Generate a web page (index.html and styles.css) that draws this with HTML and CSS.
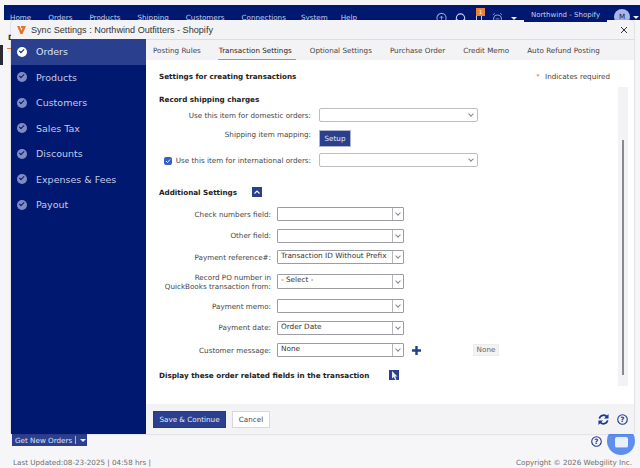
FILE: index.html
```html
<!DOCTYPE html>
<html>
<head>
  <title>Sync Settings</title>
  <link rel="stylesheet" href="styles.css">
</head>
<body>

  <div class="page-top"></div>
  <div class="nav">
    <a class="nav-link home">Home</a>
    <a class="nav-link">Orders</a>
    <a class="nav-link">Products</a>
    <a class="nav-link">Shipping</a>
    <a class="nav-link">Customers</a>
    <a class="nav-link connections">Connections</a>
    <a class="nav-link system">System</a>
    <a class="nav-link">Help</a>
    <div class="nav-icons">
      <svg width="11" height="12" viewBox="0 0 12 12"><circle cx="6" cy="6" r="5" fill="none" stroke="#8fa0d8" stroke-width="1.2"/><path d="M4 6l2-2 2 2M6 4v4" fill="none" stroke="#8fa0d8"/></svg>
      <svg width="11" height="12" viewBox="0 0 12 12"><path d="M1.500 9V6a4.500 4.500 0 0 1 9 0v3" fill="none" stroke="#c6d0ee" stroke-width="1.200"/><path d="M1 7h2v3H1zM9 7h2v3H9z" fill="#c6d0ee"/></svg>
      <span class="bell"><span class="bell-badge">1</span></span>
      <svg width="11" height="12" viewBox="0 0 12 12"><circle cx="6" cy="7" r="4.3" fill="none" stroke="#8fa0d8" stroke-width="1.2"/><path d="M1 2.5l2-1.5M11 2.5L9 1M4 7h4" stroke="#8fa0d8"/></svg>
      <span class="caret"></span>
    </div>
    <div class="store">Northwind - Shopify</div>
    <div class="avatar">M</div>
    <span class="caret"></span>
  </div>

  <div class="page-left"></div>
  <div class="page-peek">D</div>
  <div class="page-peek-line"></div>

  <div class="page-bottom">
    <div class="get-orders">Get New Orders <span class="sep"></span><span class="caret"></span></div>
    <div class="status">
      <span>Last Updated:08-23-2025 | 04:58 hrs |</span>
      <span>Copyright © 2026 Webgility Inc.</span>
    </div>
  </div>

  <svg class="page-help" width="11" height="11" viewBox="0 0 12 12"><circle cx="6" cy="6" r="5.2" fill="none" stroke="#1f3a8a" stroke-width="1.2"/><text x="6" y="8.8" text-anchor="middle" class="q">?</text></svg>
  <div class="chat"><div class="chat-icon"></div></div>

  <div class="modal">
    <div class="modal-title">
      <svg width="9" height="8" viewBox="0 0 9 8"><path d="M0 0h2.500l2 4.500L5.500 2H4V0h5L5.500 8h-2z" fill="#e8742a"/></svg>
      <span>Sync Settings : Northwind Outfitters - Shopify</span>
      <svg class="close" width="8" height="8" viewBox="0 0 8 8"><path d="M1 1l6 6M7 1L1 7" stroke="#333" stroke-width="1"/></svg>
    </div>
    <div class="modal-body">
      <div class="sidebar">
        <div class="side-item active"><span class="tick"></span>Orders</div>
        <div class="side-item"><span class="tick"></span>Products</div>
        <div class="side-item"><span class="tick"></span>Customers</div>
        <div class="side-item"><span class="tick"></span>Sales Tax</div>
        <div class="side-item"><span class="tick"></span>Discounts</div>
        <div class="side-item"><span class="tick"></span>Expenses &amp; Fees</div>
        <div class="side-item"><span class="tick"></span>Payout</div>
      </div>
      <div class="main">
        <div class="tabs">
          <div class="tab">Posting Rules</div>
          <div class="tab current">Transaction Settings</div>
          <div class="tab">Optional Settings</div>
          <div class="tab">Purchase Order</div>
          <div class="tab">Credit Memo</div>
          <div class="tab">Auto Refund Posting</div>
        </div>
        <div class="content">
          <div class="scrollbar"><div class="thumb"></div></div>

          <div class="head-row">
            <b>Settings for creating transactions</b>
            <span class="required"><i>*</i> Indicates required</span>
          </div>

          <h4 class="shipping-head">Record shipping charges</h4>
          <div class="row top">
            <label>Use this item for domestic orders:</label>
            <div class="wide-select"><span class="chev"></span></div>
          </div>
          <div class="row top setup-row">
            <label>Shipping item mapping:</label>
            <button class="setup">Setup</button>
          </div>
          <div class="row top intl-row">
            <label><span class="check"><svg width="6" height="6" viewBox="0 0 6 6"><path d="M1 3l1.500 1.500L5 1.500" fill="none" stroke="#dfe6f8" stroke-width="1"/></svg></span>Use this item for international orders:</label>
            <div class="wide-select"><span class="chev"></span></div>
          </div>

          <div class="additional">
            <h4>Additional Settings</h4>
            <span class="square-btn"><svg width="6" height="4" viewBox="0 0 6 4"><path d="M.5 3.500L3 1l2.500 2.500" fill="none" stroke="#fff" stroke-width="1.100"/></svg></span>
          </div>

          <div class="row low"><label>Check numbers field:</label><div class="combo"><span class="val"></span><span class="arrow"><span class="chev"></span></span></div></div>
          <div class="row low"><label>Other field:</label><div class="combo"><span class="val"></span><span class="arrow"><span class="chev"></span></span></div></div>
          <div class="row low"><label>Payment reference#:</label><div class="combo"><span class="val">Transaction ID Without Prefix</span><span class="arrow"><span class="chev"></span></span></div></div>
          <div class="row low two-line"><label>Record PO number in<br>QuickBooks transaction from:</label><div class="combo"><span class="val">- Select -</span><span class="arrow"><span class="chev"></span></span></div></div>
          <div class="row low"><label>Payment memo:</label><div class="combo"><span class="val"></span><span class="arrow"><span class="chev"></span></span></div></div>
          <div class="row low"><label>Payment date:</label><div class="combo"><span class="val">Order Date</span><span class="arrow"><span class="chev"></span></span></div></div>
          <div class="row low message-row">
            <label>Customer message:</label>
            <div class="combo"><span class="val">None</span><span class="arrow"><span class="chev"></span></span></div>
            <svg class="plus" width="9" height="9" viewBox="0 0 9 9"><path d="M4.500 0v9M0 4.500h9" stroke="#23408f" stroke-width="2.400"/></svg>
            <span class="chip">None</span>
          </div>

          <div class="display">
            <h4>Display these order related fields in the transaction</h4>
            <span class="square-btn"><svg width="7" height="9" viewBox="0 0 7 9"><path d="M1 0v7.500l1.800-1.600L4.200 9 5.500 8.400 4.200 5.400h2.300z" fill="#e8e8f0"/></svg></span>
          </div>
        </div>
        <div class="footer">
          <button class="save">Save &amp; Continue</button>
          <button class="cancel">Cancel</button>
          <div class="footer-icons">
            <svg width="11" height="11" viewBox="0 0 12 12"><path d="M1.500 5A4.700 4.700 0 0 1 10 3.500M10.500 7A4.700 4.700 0 0 1 2 8.500" fill="none" stroke="#1f3a8a" stroke-width="1.900"/><path d="M11.500 0v5h-5zM.5 12V7h5z" fill="#1f3a8a"/></svg>
            <svg width="11" height="11" viewBox="0 0 12 12"><circle cx="6" cy="6" r="5.200" fill="none" stroke="#1f3a8a" stroke-width="1.200"/><text x="6" y="8.800" text-anchor="middle" class="q">?</text></svg>
          </div>
        </div>
      </div>
    </div>
  </div>

</body>
</html>
```

FILE: styles.css
```css
html, body {
  margin: 0;
  height: 100%;
}

body {
  position: relative;
  width: 640px;
  height: 468px;
  overflow: hidden;
  background-color: #f6f6f8;
  font-family: "DejaVu Sans", Verdana, sans-serif;
  font-size: 7.2px;
  color: #333;
}

.page-top {
  height: 5px;
  background-color: #f4f4f6;
}

.nav {
  display: flex;
  align-items: flex-start;
  height: 15px;
  margin-left: 4px;
  padding-top: 8px;
  box-sizing: border-box;
  background-color: #00186f;
  color: #c8d0ea;
}

.nav-link {
  margin-right: 17px;
  white-space: nowrap;
}

.nav-link.home {
  margin-left: 6px;
}

.nav-link.connections {
  margin-right: 15px;
}

.nav-link.system {
  margin-right: 13px;
}

.nav-icons {
  position: absolute;
  top: 12px;
  left: 436px;
  display: flex;
  align-items: center;
  gap: 8px;
}

.bell {
  position: relative;
  width: 6px;
  height: 12px;
  margin: 0 2px;
  border: 1px solid #c6d0ee;
  border-bottom: none;
  border-radius: 3px 3px 0 0;
  box-sizing: border-box;
}

.bell-badge {
  position: absolute;
  top: -5px;
  left: -1px;
  width: 9px;
  height: 8px;
  background-color: #e8843a;
  color: #fff;
  font-size: 5px;
  line-height: 8px;
  text-align: center;
}

.caret {
  display: inline-block;
  width: 0;
  height: 0;
  border-left: 3px solid transparent;
  border-right: 3px solid transparent;
  border-top: 3px solid #e8ecf8;
}

.store {
  position: absolute;
  z-index: 2;
  top: 5px;
  left: 524px;
  width: 83px;
  height: 17px;
  background-color: #00186f;
  color: #c8d0ea;
  font-size: 7px;
  line-height: 20px;
  text-align: center;
  white-space: nowrap;
}

.avatar {
  position: absolute;
  top: 9px;
  left: 614px;
  width: 16px;
  height: 16px;
  border-radius: 50%;
  background-color: #a8b8e4;
  color: #223;
  font-size: 7.2px;
  line-height: 16px;
  text-align: center;
}

.nav > .caret {
  position: absolute;
  top: 16px;
  left: 633px;
}

.page-left {
  position: absolute;
  top: 45px;
  left: 0;
  width: 3px;
  height: 20px;
  background-color: #2a2a33;
}

.page-peek {
  position: absolute;
  top: 33px;
  left: 8px;
  font-size: 7.2px;
  font-weight: bold;
}

.page-peek-line {
  position: absolute;
  top: 48px;
  left: 7px;
  width: 4px;
  height: 1px;
  background-color: #e8843a;
}

.page-bottom {
  position: absolute;
  top: 434px;
  left: 0;
  right: 0;
  bottom: 0;
}

.get-orders {
  display: flex;
  align-items: center;
  width: 75px;
  height: 12px;
  margin-left: 12px;
  padding-left: 3px;
  box-sizing: border-box;
  background-color: #2b3f8f;
  color: #dfe4f4;
  white-space: nowrap;
}

.get-orders .sep {
  width: 1px;
  height: 8px;
  margin: 0 4px 0 3px;
  background-color: #aab4dc;
}

.status {
  display: flex;
  justify-content: space-between;
  margin: 12px 8px 0 13px;
  color: #6d6d6d;
  white-space: nowrap;
}

.page-help {
  position: absolute;
  top: 436px;
  left: 591px;
}

.chat {
  position: absolute;
  top: 427px;
  left: 607px;
  width: 28px;
  height: 28px;
  border-radius: 50%;
  background-color: #5f8fee;
  display: flex;
  align-items: center;
  justify-content: center;
}

.chat-icon {
  width: 13px;
  height: 11px;
  margin-top: 3px;
  border-radius: 2px;
  background-color: #e9effc;
  border-bottom: 1px solid #9db8ee;
  box-sizing: border-box;
}

.q {
  font-family: "DejaVu Sans", sans-serif;
  font-size: 8px;
  font-weight: bold;
  fill: #1f3a8a;
}

.modal {
  position: absolute;
  top: 20px;
  left: 11px;
  width: 623px;
  height: 414px;
  display: flex;
  flex-direction: column;
  background-color: #f3f3f6;
  border-radius: 4px 4px 0 0;
  box-shadow: 0 0 2px rgba(0,0,0,0.25);
}

.modal-title {
  display: flex;
  align-items: center;
  gap: 5px;
  height: 19px;
  padding-left: 6px;
  flex-shrink: 0;
  font-family: "Liberation Sans", Arial, sans-serif;
  font-size: 9.1px;
  color: #333;
}

.close {
  margin-left: auto;
  margin-right: 6px;
}

.modal-body {
  display: flex;
  flex: 1;
  min-height: 0;
}

.sidebar {
  width: 135px;
  flex-shrink: 0;
  background-color: #00186f;
}

.side-item {
  display: flex;
  align-items: center;
  gap: 9px;
  height: 25.5px;
  padding-left: 6px;
  color: #c3cbe8;
  font-size: 9.5px;
}

.side-item.active {
  background-color: #2b3f8f;
  color: #dfe4f4;
}

.tick {
  width: 10px;
  height: 10px;
  border-radius: 50%;
  background-color: #7f8cc4;
  position: relative;
  flex-shrink: 0;
}

.tick::after {
  content: "";
  position: absolute;
  top: 2px;
  left: 2px;
  width: 5px;
  height: 2.5px;
  border-left: 1.2px solid #00186f;
  border-bottom: 1.2px solid #00186f;
  transform: rotate(-45deg);
  box-sizing: border-box;
}

.side-item.active .tick {
  background-color: #fff;
}

.main {
  flex: 1;
  display: flex;
  flex-direction: column;
  min-width: 0;
}

.tabs {
  display: flex;
  height: 21px;
  padding-left: 7px;
  gap: 18px;
  border-top: 1px solid #dcdce0;
  box-sizing: border-box;
  flex-shrink: 0;
}

.tab {
  padding-top: 6px;
  height: 20px;
  box-sizing: border-box;
  color: #444;
  white-space: nowrap;
}

.tab.current {
  position: relative;
  color: #222;
}

.tab.current::after {
  content: "";
  position: absolute;
  left: -1px;
  right: -4px;
  bottom: -1px;
  height: 2px;
  background-color: #e8843a;
}

.content {
  position: relative;
  flex: 1;
  min-height: 0;
  padding: 12px 0 0 13px;
  background-color: #fff;
}

.scrollbar {
  position: absolute;
  top: 27px;
  left: 472px;
  width: 10px;
  height: 299px;
  background-color: #f3f3f5;
}

.thumb {
  width: 2px;
  height: 235px;
  margin: 53px 0 0 4px;
  background-color: #8a8a8e;
}

h4 {
  margin: 0;
  font-size: 7.2px;
  font-weight: bold;
  color: #222;
}

.head-row {
  display: flex;
  justify-content: space-between;
  color: #222;
}

.required {
  margin-right: 24px;
  color: #444;
}

.required i {
  color: #e8843a;
  font-style: normal;
  margin-right: 3px;
}

.shipping-head {
  margin-top: 14px;
}

.row {
  display: flex;
  align-items: center;
}

.row label {
  text-align: right;
  flex-shrink: 0;
  color: #444;
  white-space: nowrap;
}

.row.top {
  margin-top: 4px;
}

.row.top label {
  width: 152px;
  margin-right: 8px;
}

.wide-select {
  display: flex;
  align-items: center;
  justify-content: flex-end;
  width: 159px;
  height: 14px;
  padding-right: 4px;
  box-sizing: border-box;
  border: 1px solid #bdbdc2;
  border-radius: 2px;
  background-color: #fff;
}

.chev {
  width: 3px;
  height: 3px;
  border-right: 1px solid #888;
  border-bottom: 1px solid #888;
  transform: rotate(45deg);
  margin-top: -2px;
}

.row.setup-row {
  align-items: flex-start;
  margin-top: 8px;
}

.row.intl-row {
  margin-top: 6px;
}

.setup {
  width: 32px;
  height: 17px;
  padding: 0;
  border: 1px solid #aeb4cc;
  background-color: #2b3f8f;
  color: #e6e9f6;
  font-family: inherit;
  font-size: 7.2px;
}

.check {
  display: inline-flex;
  align-items: center;
  justify-content: center;
  width: 8px;
  height: 8px;
  margin-right: 4px;
  vertical-align: -1px;
  border-radius: 2px;
  background-color: #3a5fc0;
}

.additional {
  display: flex;
  align-items: center;
  gap: 15px;
  margin-top: 20px;
}

.square-btn {
  display: flex;
  align-items: center;
  justify-content: center;
  width: 10px;
  height: 10px;
  background-color: #2b3f8f;
}

.row.low {
  margin-top: 7.5px;
}

.additional + .row.low {
  margin-top: 10px;
}

.row.low label {
  width: 112px;
  margin-right: 6px;
}

.row.two-line {
  height: 15px;
  margin-top: 10px;
}

.row.two-line + .row.low {
  margin-top: 10px;
}

.row.message-row {
  margin-top: 8.5px;
}

.row.two-line label {
  line-height: 9px;
}

.combo {
  display: flex;
  width: 127px;
  height: 14px;
  box-sizing: border-box;
  border: 1px solid #9c9ca2;
  border-radius: 1px;
  background-color: #fff;
}

.two-line .combo {
  height: 15px;
}

.val {
  flex: 1;
  padding-left: 3px;
  font-size: 7.3px;
  line-height: 10px;
  color: #333;
  white-space: nowrap;
}

.arrow {
  display: flex;
  align-items: center;
  justify-content: center;
  width: 10px;
  border-left: 1px solid #b8b8bc;
}

.plus {
  margin-left: 8px;
}

.chip {
  margin-left: 52px;
  width: 26px;
  height: 12px;
  box-sizing: border-box;
  background-color: #f3f3f3;
  border: 1px solid #ececec;
  color: #666;
  line-height: 10px;
  text-align: center;
}

.display {
  display: flex;
  align-items: center;
  gap: 20px;
  margin-top: 13px;
}

.footer {
  display: flex;
  align-items: flex-start;
  gap: 6px;
  height: 30px;
  padding: 7px 0 0 7px;
  box-sizing: border-box;
  flex-shrink: 0;
  background-color: #f3f3f6;
}

.footer button {
  height: 17px;
  padding: 0;
  font-family: inherit;
  font-size: 7.2px;
}

.save {
  width: 73px;
  border: 1px solid #27397f;
  background-color: #2b3f8f;
  color: #e6e9f6;
}

.cancel {
  width: 38px;
  border: 1px solid #d8d8dc;
  background-color: #fff;
  color: #444;
}

.footer-icons {
  display: flex;
  gap: 8px;
  margin-left: auto;
  margin-right: 6px;
  margin-top: 3px;
}
```
